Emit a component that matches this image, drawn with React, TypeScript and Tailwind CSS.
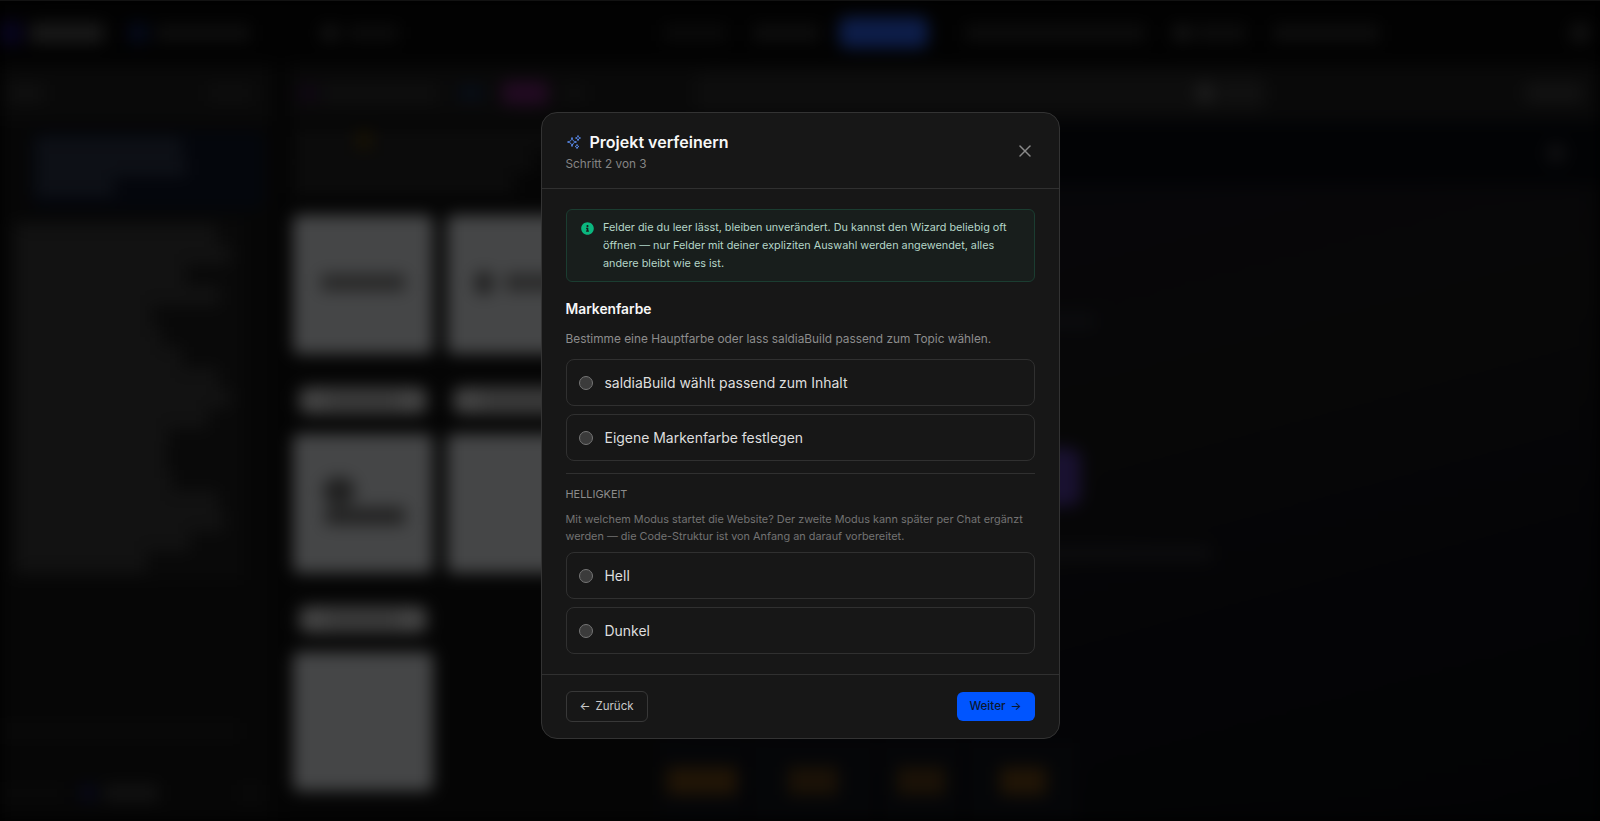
import { useState } from "react";
import { HiOutlineSparkles } from "react-icons/hi2";
import { FaInfoCircle } from "react-icons/fa";
import { X } from "lucide-react";

// Widths of the chat message lines behind the dialog
const messageLines = [
  200, 214, 170, 204, 136, 146, 166, 202, 214, 192, 152, 150, 156, 202, 208, 174, 130,
];

const TopBar = () => (
  <div className="flex h-[65px] shrink-0 items-center bg-[#020202]">
    <div className="h-6 w-[22px] bg-[#08041f]" />
    <div className="ml-2 h-[20px] w-[74px] bg-[#191919]" />
    <div className="ml-6 h-5 w-5 bg-[#040a1b]" />
    <div className="ml-2 h-4 w-[94px] bg-[#0e0e0e]" />
    <div className="ml-[70px] h-4 w-5 rounded-full bg-[#131313]" />
    <div className="ml-2 h-3.5 w-[50px] bg-[#0d0d0d]" />
    <div className="ml-[265px] h-4 w-[64px] bg-[#0a0a0a]" />
    <div className="ml-[26px] h-4 w-[66px] bg-[#0e0e0e]" />
    <div className="ml-[20px] h-[31px] w-[89px] rounded-lg bg-[#0d1d49]" />
    <div className="ml-[37px] h-4 w-[180px] bg-[#0d0d0d]" />
    <div className="ml-[27px] h-4 w-5 rounded-full bg-[#151515]" />
    <div className="ml-1 h-4 w-[50px] bg-[#0d0d0d]" />
    <div className="ml-[27px] h-4 w-[106px] bg-[#0e0e0e]" />
    <div className="ml-auto mr-2.5 h-5 w-5 rounded-full bg-[#131313]" />
  </div>
);

const ChatPanel = () => (
  <div className="flex w-[272px] shrink-0 flex-col bg-[#060606]">
    <div className="flex h-[56px] shrink-0 items-center bg-[#090909] pl-2 pr-5">
      <div className="h-4 w-9 bg-[#101010]" />
      <div className="ml-auto h-4 w-11 bg-[#0e0e0e]" />
    </div>
    <div className="ml-[30px] mt-[9px] h-[80px] w-[235px] shrink-0 rounded-xl bg-[#04060c] pl-1.5 pt-[9px]">
      <div className="h-[16px] w-[146px] bg-[#0f1218]" />
      <div className="mt-1 h-[16px] w-[150px] bg-[#0f1218]" />
      <div className="mt-1 h-[16px] w-[78px] bg-[#0f1218]" />
    </div>
    <div className="ml-[10px] mt-[10px] flex h-[360px] w-[234px] shrink-0 flex-col bg-[#090909] pl-1.5 pt-1">
      {messageLines.map((width, i) => (
        <div key={i} className="h-[20.5px] shrink-0 pb-px">
          <div className="h-full bg-[#121212]" style={{ width }} />
        </div>
      ))}
    </div>
    <div className="mt-[143px] h-4 w-[240px] shrink-0 bg-[#090909]" />
    <div className="mt-[46px] flex items-center">
      <div className="h-3 w-16 bg-[#090909]" />
      <div className="ml-4 h-4 w-4 bg-[#07081a]" />
      <div className="ml-2 h-4 w-[54px] bg-[#121212]" />
      <div className="ml-auto mr-3 h-4 w-5 bg-[#0a0a0a]" />
    </div>
  </div>
);

type LogoCardProps = { variant?: "word" | "mark" | "stacked" | "blank"; action?: boolean };

const LogoCard = ({ variant = "blank", action = true }: LogoCardProps) => (
  <div className="flex h-[218.5px] w-[140px] flex-col items-center">
    <div className="flex h-[139px] w-full shrink-0 flex-col justify-center rounded-md bg-[#454647] px-7">
      {variant === "word" && <div className="mt-[-4px] h-[17px] w-[84px] bg-[#282828]" />}
      {variant === "mark" && (
        <div className="mt-[-4px] flex items-center gap-3">
          <div className="h-6 w-5 rounded-full bg-[#202020]" />
          <div className="h-[17px] w-[60px] bg-[#292929]" />
        </div>
      )}
      {variant === "stacked" && (
        <>
          <div className="ml-0.5 mt-[-4px] h-[28px] w-[32px] rounded-full bg-[#202020]" />
          <div className="ml-1 mt-0.5 h-[18px] w-[80px] bg-[#232323]" />
        </>
      )}
    </div>
    {action && (
      <div className="mt-[33px] h-[27px] w-[128px] rounded-lg bg-[#424242] px-7 py-[7px]">
        <div className="h-full bg-[#363636]" />
      </div>
    )}
  </div>
);

const LogoPanel = () => (
  <div className="ml-[18px] flex w-[370px] shrink-0 flex-col bg-[#050505]">
    <div className="flex h-[56px] shrink-0 items-center bg-[#090909] pl-2">
      <div className="h-4 w-5 bg-[#100714]" />
      <div className="ml-1 h-4 w-[116px] bg-[#0f0f0f]" />
      <div className="ml-5 h-4 w-[26px] bg-[#080d17]" />
      <div className="ml-[17px] h-6 w-[48px] rounded-lg bg-[#220a22]" />
      <div className="ml-4 h-4 w-5 bg-[#0e0e0e]" />
    </div>
    <div className="mt-[10px] flex h-[64px] shrink-0 flex-col gap-1 px-1">
      <div className="flex h-[18px] bg-[#0c0c0c] pl-[62px]">
        <div className="w-4 bg-[#191304]" />
      </div>
      <div className="h-[18px] w-[240px] bg-[#0c0c0c]" />
      <div className="h-[18px] w-[220px] bg-[#0c0c0c]" />
    </div>
    <div className="mt-[20px] flex flex-wrap gap-x-[14px] pl-[3px]">
      <LogoCard variant="word" />
      <LogoCard variant="mark" />
      <LogoCard variant="stacked" />
      <LogoCard action={false} />
      <LogoCard action={false} />
    </div>
  </div>
);

const Preview = () => (
  <div className="flex min-w-0 flex-1 flex-col">
    <div className="flex h-[56px] shrink-0 items-center bg-[#090909]">
      <div className="ml-[35px] flex h-[38px] w-[570px] items-center rounded-lg bg-[#0d0d0d]">
        <div className="ml-auto h-5 w-5 rounded-full bg-[#1d1d1d]" />
        <div className="ml-1.5 h-4 w-[44px] bg-[#111111]" />
      </div>
      <div className="ml-auto mr-4 h-5 w-[60px] rounded-lg bg-[#121212]" />
    </div>
    <div className="flex h-[64px] shrink-0 items-center justify-end bg-[#020305] pr-[34px]">
      <div className="h-5 w-5 rounded-full bg-[#101012]" />
    </div>
    <div className="flex flex-1 flex-col bg-[linear-gradient(165deg,#06050a_0%,#070707_40%,#040406_68%,#020304_100%)]">
      <div className="mt-[128px] h-4 w-[435px] bg-[#0b0c0e]" />
      <div className="mt-[119px] h-[58px] w-[421px] rounded-xl bg-[#191130]" />
      <div className="mt-[40px] h-[15px] w-[551px] bg-[#0c0c0e]" />
      <div className="mt-[182px] flex gap-[8px]">
        <div className="flex h-[76px] w-[84px] items-center justify-center bg-[#050608]">
          <div className="h-7 w-[70px] bg-[#211506]" />
        </div>
        <div className="flex h-[76px] w-[122px] items-center justify-center bg-[#050608]">
          <div className="h-7 w-[50px] bg-[#1b1207]" />
        </div>
        <div className="flex h-[76px] w-[78px] items-center justify-center bg-[#050608]">
          <div className="h-7 w-[48px] bg-[#1b1207]" />
        </div>
        <div className="flex h-[76px] w-[110px] items-center justify-center bg-[#050608]">
          <div className="h-7 w-[46px] bg-[#211506]" />
        </div>
      </div>
    </div>
  </div>
);

type OptionProps = {
  name: string;
  label: string;
  selected: boolean;
  onSelect: () => void;
};

const Option = ({ name, label, selected, onSelect }: OptionProps) => (
  <label className="flex h-[47px] cursor-pointer items-center rounded-lg border border-[#303030] pl-3">
    <input
      type="radio"
      name={name}
      checked={selected}
      onChange={onSelect}
      className="size-3.5 appearance-none rounded-full border border-[#757575] bg-[#3b3b3b] checked:bg-[#0055ff]"
    />
    <span className="ml-3 text-[13.96px] leading-5 text-[#dedede]">{label}</span>
  </label>
);

const App = () => {
  const [color, setColor] = useState<string | null>(null);
  const [mode, setMode] = useState<string | null>(null);

  return (
    <div className="relative h-[821px] overflow-hidden bg-black font-['Inter',sans-serif]">
      <div className="flex h-full flex-col bg-[#040404] blur-[8px]" aria-hidden="true">
        <TopBar />
        <div className="flex min-h-0 flex-1">
          <ChatPanel />
          <LogoPanel />
          <Preview />
        </div>
      </div>

      <div className="absolute inset-0 flex items-start justify-center border-t border-[#121212] pt-[111px]">
        <div
          role="dialog"
          aria-modal="true"
          className="flex h-[627px] w-[519px] flex-col rounded-2xl border border-[#333333] bg-[#171717]"
        >
          <div className="flex h-[76px] shrink-0 items-center justify-between border-b border-[#303030] pl-6 pr-6">
            <div className="pt-0.5">
              <h2 className="flex items-center text-[16.05px] font-semibold leading-6 text-[#f7f7f7]">
                <HiOutlineSparkles className="mr-2 size-4 text-[#5b8def]" />
                Projekt verfeinern
              </h2>
              <p className="text-[11.8px] leading-5 text-[#858585]">Schritt 2 von 3</p>
            </div>
            <button aria-label="Schließen" className="text-[#8a8a8a]">
              <X className="size-5" strokeWidth={1.8} />
            </button>
          </div>

          <div className="flex-1 px-6 pt-5">
            <div className="flex h-[73px] rounded-md border border-[#1b3d31] bg-[#181e1c] pl-[14px] pt-[8px]">
              <FaInfoCircle className="mt-[4px] size-[13px] shrink-0 text-[#0bb77f]" />
              <p className="ml-[9.5px] text-[10.84px] leading-[18px] text-[#b5d6c8]">
                Felder die du leer lässt, bleiben unverändert. Du kannst den Wizard beliebig oft
                <br />
                öffnen — nur Felder mit deiner expliziten Auswahl werden angewendet, alles
                <br />
                andere bleibt wie es ist.
              </p>
            </div>

            <h3 className="mt-[17px] text-[13.8px] font-semibold leading-5 text-[#f7f7f7]">Markenfarbe</h3>
            <p className="mt-[11px] text-[11.85px] leading-[18px] text-[#8c8c8c]">
              Bestimme eine Hauptfarbe oder lass saldiaBuild passend zum Topic wählen.
            </p>
            <div className="mt-[11px] flex flex-col gap-2">
              <Option
                name="color"
                label="saldiaBuild wählt passend zum Inhalt"
                selected={color === "auto"}
                onSelect={() => setColor("auto")}
              />
              <Option
                name="color"
                label="Eigene Markenfarbe festlegen"
                selected={color === "custom"}
                onSelect={() => setColor("custom")}
              />
            </div>

            <div className="mt-3 border-t border-[#303030] pt-3">
              <h4 className="text-[10.92px] uppercase leading-4 text-[#8c8c8c]">Helligkeit</h4>
              <p className="mt-[9px] text-[10.89px] leading-[16.5px] text-[#737373]">
                Mit welchem Modus startet die Website? Der zweite Modus kann später per Chat ergänzt
                <br />
                werden — die Code-Struktur ist von Anfang an darauf vorbereitet.
              </p>
              <div className="mt-2 flex flex-col gap-2">
                <Option
                  name="mode"
                  label="Hell"
                  selected={mode === "light"}
                  onSelect={() => setMode("light")}
                />
                <Option
                  name="mode"
                  label="Dunkel"
                  selected={mode === "dark"}
                  onSelect={() => setMode("dark")}
                />
              </div>
            </div>
          </div>

          <div className="flex h-[64px] shrink-0 items-center justify-between border-t border-[#303030] px-6">
            <button className="flex h-[31px] w-[82px] items-center justify-center gap-[5px] rounded-md border border-[#383838] text-[11.5px] text-[#c9c9c9]">
              <span>←</span>
              <span>Zurück</span>
            </button>
            <button className="flex h-[29px] w-[78px] items-center justify-center gap-[5px] rounded-md bg-[#0055ff] text-[11.63px] font-medium text-[#0b1730]">
              <span>Weiter</span>
              <span>→</span>
            </button>
          </div>
        </div>
      </div>
    </div>
  );
};

export default App;
